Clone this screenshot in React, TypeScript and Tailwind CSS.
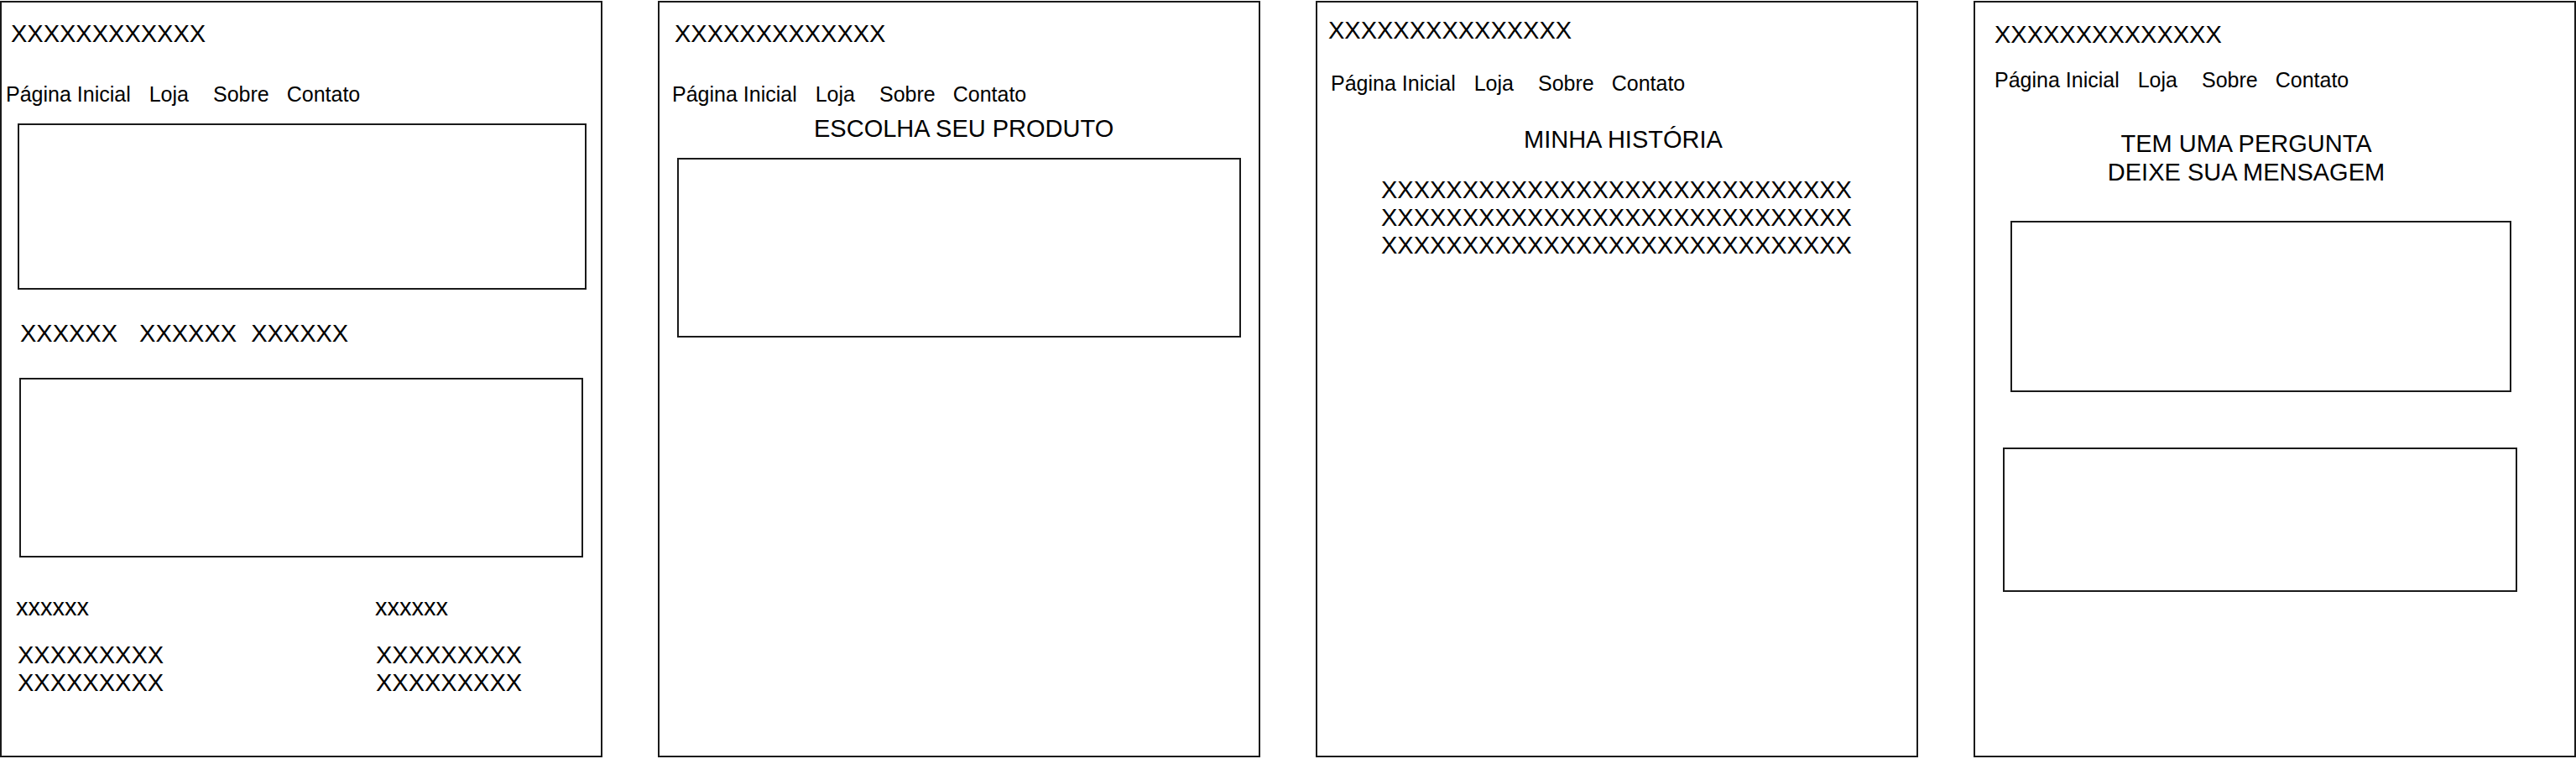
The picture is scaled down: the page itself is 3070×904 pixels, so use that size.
import React from "react";

const Nav = ({ className = "" }: { className?: string }) => (
  <div className={"flex text-[25px] leading-none whitespace-nowrap " + className}>
    <span>Página Inicial</span>
    <span className="ml-[22px]">Loja</span>
    <span className="ml-[29px]">Sobre</span>
    <span className="ml-[21px]">Contato</span>
  </div>
);

const Box = ({ className = "" }: { className?: string }) => (
  <div className={"border-2 border-[#1a1a1a] shrink-0 " + className} />
);

const Panel = ({ children }: { children: React.ReactNode }) => (
  <div className="w-[718px] h-[901px] shrink-0 border-2 border-[#1a1a1a] flex flex-col bg-white">
    {children}
  </div>
);

export default function App() {
  return (
    <div className="w-[3070px] h-[904px] bg-white text-black font-['Liberation_Sans',Arial,sans-serif] overflow-hidden">
      <div className="flex gap-[66px] pt-[1px]">
        {/* Página Inicial */}
        <Panel>
          <div className="mt-[23px] ml-[11px] text-[29px] leading-none">XXXXXXXXXXXX</div>
          <Nav className="mt-[45px] ml-[5px]" />
          <Box className="mt-[22px] ml-[19px] w-[678px] h-[198px]" />
          <div className="mt-[38px] ml-[22px] flex text-[29px] leading-none">
            <span>XXXXXX</span>
            <span className="ml-[26px]">XXXXXX</span>
            <span className="ml-[17px]">XXXXXX</span>
          </div>
          <Box className="mt-[38px] ml-[21px] w-[672px] h-[214px]" />
          <div className="flex mt-[45px] ml-[17px] text-[29px]">
            <div className="w-[428px] flex flex-col">
              <div className="leading-none">xxxxxx</div>
              <div className="mt-[26px] ml-[2px] leading-[33px]">
                <div>XXXXXXXXX</div>
                <div>XXXXXXXXX</div>
              </div>
            </div>
            <div className="flex flex-col">
              <div className="leading-none">xxxxxx</div>
              <div className="mt-[26px] ml-[1px] leading-[33px]">
                <div>XXXXXXXXX</div>
                <div>XXXXXXXXX</div>
              </div>
            </div>
          </div>
        </Panel>

        {/* Loja */}
        <Panel>
          <div className="mt-[23px] ml-[18px] text-[29px] leading-none">XXXXXXXXXXXXX</div>
          <Nav className="mt-[45px] ml-[15px]" />
          <div className="mt-[14px] ml-[184px] text-[29px] leading-none whitespace-nowrap">ESCOLHA SEU PRODUTO</div>
          <Box className="mt-[20px] ml-[21px] w-[672px] h-[214px]" />
        </Panel>

        {/* Sobre */}
        <Panel>
          <div className="mt-[19px] ml-[13px] text-[29px] leading-none">XXXXXXXXXXXXXXX</div>
          <Nav className="mt-[36px] ml-[16px]" />
          <div className="mt-[40px] ml-[246px] text-[29px] leading-none whitespace-nowrap">MINHA HISTÓRIA</div>
          <div className="mt-[29px] ml-[76px] text-[29px] leading-[33px]">
            <div>XXXXXXXXXXXXXXXXXXXXXXXXXXXXX</div>
            <div>XXXXXXXXXXXXXXXXXXXXXXXXXXXXX</div>
            <div>XXXXXXXXXXXXXXXXXXXXXXXXXXXXX</div>
          </div>
        </Panel>

        {/* Contato */}
        <Panel>
          <div className="mt-[24px] ml-[23px] text-[29px] leading-none">XXXXXXXXXXXXXX</div>
          <Nav className="mt-[27px] ml-[23px]" />
          <div className="mt-[46px] w-[646px] text-center text-[29px] leading-[34px]">
            <div>TEM UMA PERGUNTA</div>
            <div>DEIXE SUA MENSAGEM</div>
          </div>
          <Box className="mt-[41px] ml-[42px] w-[597px] h-[204px]" />
          <Box className="mt-[66px] ml-[33px] w-[613px] h-[172px]" />
        </Panel>
      </div>
    </div>
  );
}
